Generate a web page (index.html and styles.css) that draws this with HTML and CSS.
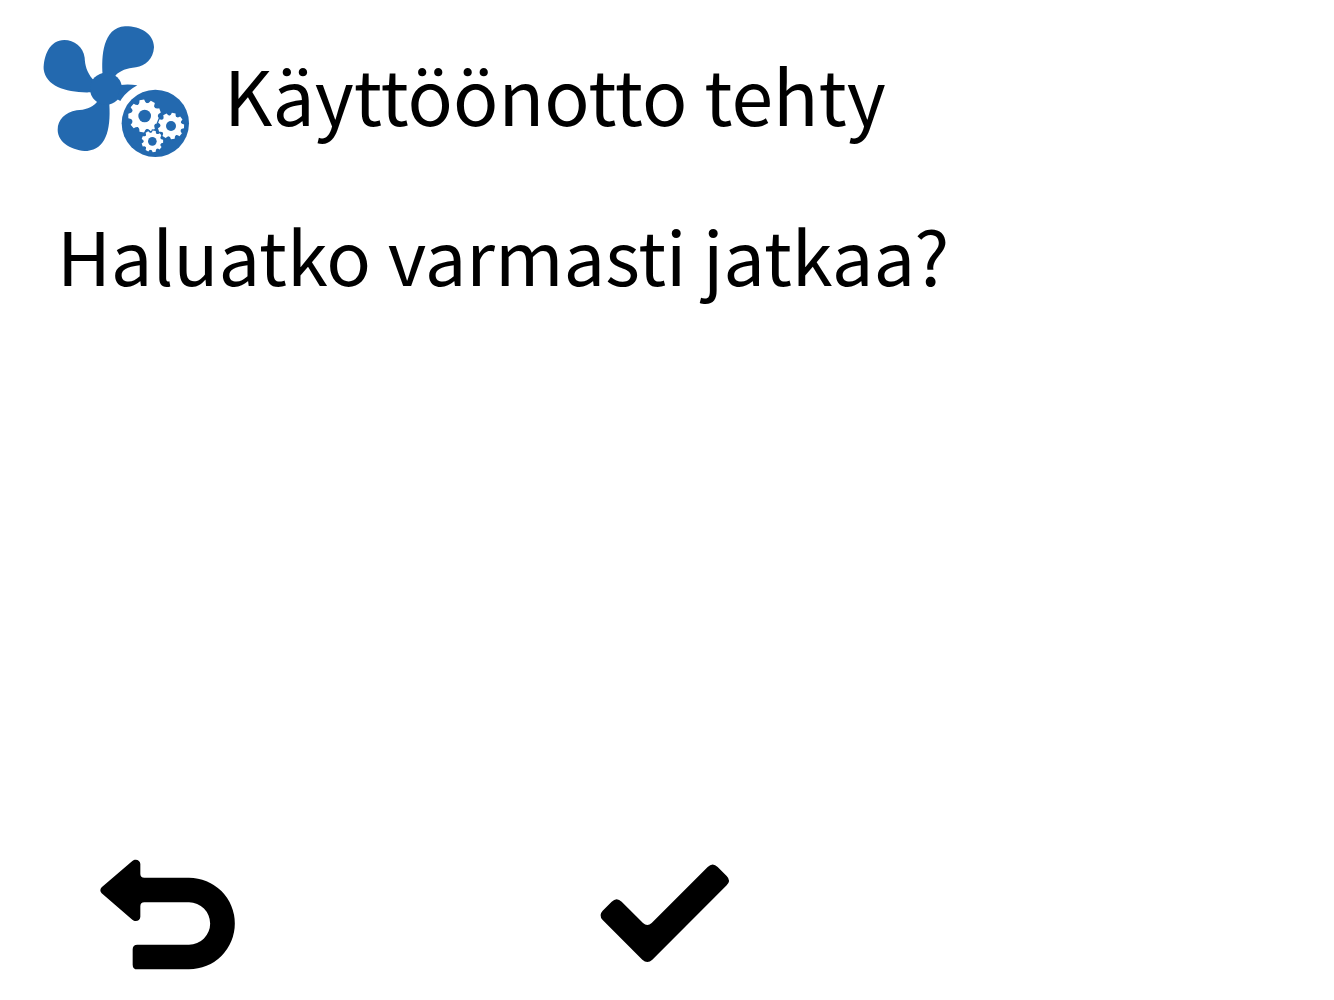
FILE: index.html
```html
<!DOCTYPE html>
<html lang="fi">
<head>
    <meta charset="UTF-8">
    <meta name="viewport" content="width=device-width, initial-scale=1.0">
    <title>Käyttöönotto tehty</title>
    <link rel="stylesheet" href="styles.css">
</head>
<body>
    <header class="page-header">
        <svg class="fan-icon" viewBox="0 0 510 450" aria-hidden="true">
            <defs>
                <path id="tooth" d="M-14 -35 Q-8 -40 -7 -49 L7 -49 Q8 -40 14 -35 L0 0 Z"/>
                <g id="gear">
                    <circle r="39"/>
                    <use href="#tooth"/>
                    <use href="#tooth" transform="rotate(40)"/>
                    <use href="#tooth" transform="rotate(80)"/>
                    <use href="#tooth" transform="rotate(120)"/>
                    <use href="#tooth" transform="rotate(160)"/>
                    <use href="#tooth" transform="rotate(200)"/>
                    <use href="#tooth" transform="rotate(240)"/>
                    <use href="#tooth" transform="rotate(280)"/>
                    <use href="#tooth" transform="rotate(320)"/>
                </g>
            </defs>
            <g class="fan">
                <path d="M218 180 C214 125 218 38 285 34 C328 33 372 55 372 97 C370 132 345 154 318 157 C290 160 271 167 257 181 L240 215 Z"/>
                <path d="M187 191 C170 170 165 150 164 128 C160 95 132 75 103 75 C60 75 41 120 41 163 C48 215 110 234 181 232 L220 220 Z"/>
                <path d="M199 263 C185 278 165 284 140 286 C105 292 83 315 83 344 C83 385 130 407 172 408 C225 402 243 350 238 268 L225 230 Z"/>
                <circle cx="228" cy="221" r="48"/>
                <path d="M272 210 Q296 207 322 211 Q293 227 275 251 L271 258 L262 253 Z"/>
                <circle cx="376" cy="325" r="101"/>
            </g>
            <g class="gears">
                <use href="#gear" transform="translate(344 303) rotate(-10)"/>
                <use class="gear-gap" href="#gear" transform="translate(367 379) scale(0.66) rotate(10)"/>
                <use href="#gear" transform="translate(367 379) scale(0.66) rotate(10)"/>
                <use class="gear-gap" href="#gear" transform="translate(423 333) scale(0.8) rotate(12)"/>
                <use href="#gear" transform="translate(423 333) scale(0.8) rotate(12)"/>
            </g>
            <g class="gear-holes">
                <circle cx="344" cy="303" r="19"/>
                <circle cx="423" cy="333" r="15"/>
                <circle cx="367" cy="379" r="13"/>
            </g>
        </svg>
        <h1>Käyttöönotto tehty</h1>
    </header>

    <main>
        <p class="question">Haluatko varmasti jatkaa?</p>
    </main>

    <footer class="actions">
        <button type="button" class="back" aria-label="Takaisin">
            <svg viewBox="-6 0 480 390" aria-hidden="true">
                <path d="M38 112 L130 33 C139 25 154 30 154 42 V72 Q154 83 166 83 H300 A137 137 0 0 1 300 358 H145 Q131 358 131 344 V298 Q131 284 145 284 H300 A63 63 0 0 0 300 157 H166 Q154 157 154 169 V200 C154 212 139 217 130 209 L38 130 Q30 121 38 112 Z"/>
            </svg>
        </button>
        <button type="button" class="confirm" aria-label="Jatka">
            <svg viewBox="6 0 480 390" aria-hidden="true">
                <path d="M53 182 L80 155 Q95 140 110 155 L174 219 Q187 231 200 219 L368 51 Q383 36 398 51 L425 78 Q439 92 425 106 L202 329 Q187 343 172 329 L53 210 Q40 196 53 182 Z"/>
            </svg>
        </button>
    </footer>
</body>
</html>
```
FILE: styles.css
```css
* {
    box-sizing: border-box;
}

body {
    margin: 0;
    min-height: 100vh;
    display: flex;
    flex-direction: column;
    background-color: #fff;
    color: #000;
    font-family: "Noto Sans CJK SC", "Open Sans", sans-serif;
}

.page-header {
    display: flex;
    align-items: center;
    gap: 24px;
    padding: 15px 30px 0;
}

.fan-icon {
    width: 170px;
    height: 150px;
    flex-shrink: 0;
}

.fan,
.gear-holes {
    fill: #2369af;
}

.gears {
    fill: #fff;
}

.gear-gap {
    fill: #2369af;
    stroke: #2369af;
    stroke-width: 10px;
}

h1,
.question {
    margin: 0;
    font-size: 75px;
    font-weight: 400;
    line-height: 100px;
}

h1 {
    padding-top: 8px;
}

.question {
    font-size: 74px;
}

main {
    flex: 1;
    padding: 39px 57px;
}

.actions {
    display: grid;
    grid-template-columns: 1fr 2fr 1fr;
    justify-items: center;
    padding-bottom: 20px;
}

.actions button {
    padding: 0;
    border: none;
    background: none;
    cursor: pointer;
}

.actions svg {
    display: block;
    width: 160px;
    height: 130px;
}
```
